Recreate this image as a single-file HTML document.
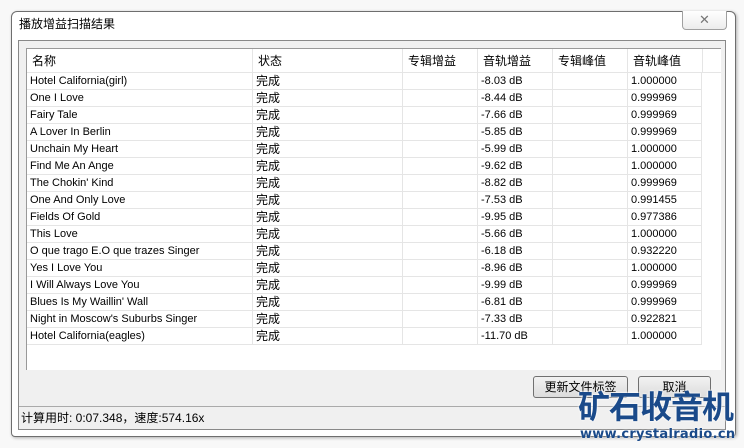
<!DOCTYPE html>
<html><head><meta charset="utf-8"><style>
*{margin:0;padding:0;box-sizing:border-box}
body{width:744px;height:448px;background:#f8f8f8;position:relative;overflow:hidden;font-family:"Liberation Sans","Noto Sans CJK SC",sans-serif;font-size:11px;color:#000}
.win{position:absolute;left:11px;top:11px;width:725px;height:426px;border:1px solid #6e6e6e;border-radius:6px 6px 4px 4px;background:#fff;box-shadow:1px 1px 3px rgba(0,0,0,.3)}
.title{position:absolute;left:19px;top:15px;font-size:12px;font-family:"Noto Sans CJK SC",sans-serif}
.close{position:absolute;left:682px;top:11px;width:45px;height:19px;border:1px solid #a0a0a0;border-top:none;border-radius:0 0 4px 4px;background:linear-gradient(#fff,#ececec);color:#777;font-size:13px;text-align:center;line-height:17px}
.client{position:absolute;left:18px;top:40px;width:708px;height:390px;border:1px solid #888;background:#f0f0f0}
.list{position:absolute;left:26px;top:48px;width:695px;height:322px;background:#fff;border-left:1px solid #999;border-top:1px solid #999}
.hdr{position:absolute;left:0;top:0;height:24px;width:694px;border-bottom:1px solid #e5e5e5;background:#fff}
.hc{position:absolute;top:0;height:23px;line-height:23px;font-size:12px;border-right:1px solid #e5e5e5;padding-left:5px;font-family:"Noto Sans CJK SC",sans-serif}
.row{position:absolute;left:0;height:17px;width:674px}
.c{position:absolute;top:0;height:17px;line-height:17px;border-right:1px solid #e5e5e5;border-bottom:1px solid #e5e5e5;padding-left:3px;white-space:nowrap}
.cn{font-family:"Noto Sans CJK SC",sans-serif;font-size:12px;line-height:15px}
.status{position:absolute;left:19px;top:406px;width:706px;height:23px;border-top:1px solid #aaa;background:#f0f0f0;font-size:12px;line-height:22px;padding-left:2px;font-family:"Liberation Sans","Noto Sans CJK SC",sans-serif}
.btn{position:absolute;top:376px;height:22px;border:1px solid #707070;border-radius:3px;background:linear-gradient(#f2f2f2,#dcdcdc);font-size:12px;text-align:center;line-height:20px;font-family:"Noto Sans CJK SC",sans-serif}
.wm{position:absolute;left:578px;top:386px;font-size:32px;font-weight:bold;color:#1a4a8a;letter-spacing:-1px;font-family:"WenQuanYi Zen Hei","Noto Sans CJK SC",sans-serif;text-shadow:0 0 2px #fff,0 0 2px #fff;line-height:38px;white-space:nowrap}
.wm2{position:absolute;left:580px;top:426px;font-size:13px;font-weight:bold;color:#1a4a8a;letter-spacing:0.3px;text-shadow:0 0 2px #fff;line-height:18px;font-family:"DejaVu Sans",sans-serif;white-space:nowrap}
</style></head><body>
<div class="win"></div>
<div class="title">播放增益扫描结果</div>
<div class="close">✕</div>
<div class="client"></div>
<div class="list">
<div class="hdr">
<div class="hc" style="left:0;width:226px">名称</div>
<div class="hc" style="left:226px;width:150px">状态</div>
<div class="hc" style="left:376px;width:75px">专辑增益</div>
<div class="hc" style="left:451px;width:75px">音轨增益</div>
<div class="hc" style="left:526px;width:75px">专辑峰值</div>
<div class="hc" style="left:601px;width:75px">音轨峰值</div>
<div class="hc" style="left:676px;width:19px;border:none"></div>
</div>
<div id="rows"></div>
</div>
<div class="btn" style="left:533px;width:95px">更新文件标签</div>
<div class="btn" style="left:638px;width:73px">取消</div>
<div class="status">计算用时: 0:07.348，速度:574.16x</div>
<div class="wm">矿石收音机</div>
<div class="wm2">www.crystalradio.cn</div>
<script>
var d=[["Hotel California(girl)","-8.03 dB","1.000000"],["One I Love","-8.44 dB","0.999969"],["Fairy Tale","-7.66 dB","0.999969"],["A Lover In Berlin","-5.85 dB","0.999969"],["Unchain My Heart","-5.99 dB","1.000000"],["Find Me An Ange","-9.62 dB","1.000000"],["The Chokin' Kind","-8.82 dB","0.999969"],["One And Only Love","-7.53 dB","0.991455"],["Fields Of Gold","-9.95 dB","0.977386"],["This Love","-5.66 dB","1.000000"],["O que trago E.O que trazes Singer","-6.18 dB","0.932220"],["Yes I Love You","-8.96 dB","1.000000"],["I Will Always Love You","-9.99 dB","0.999969"],["Blues Is My Waillin' Wall","-6.81 dB","0.999969"],["Night in Moscow's Suburbs Singer","-7.33 dB","0.922821"],["Hotel California(eagles)","-11.70 dB","1.000000"]];
var h="";d.forEach(function(r,i){h+='<div class="row" style="top:'+(24+i*17)+'px"><div class="c" style="left:0;width:226px">'+r[0]+'</div><div class="c cn" style="left:226px;width:150px">完成</div><div class="c" style="left:376px;width:75px"></div><div class="c" style="left:451px;width:75px">'+r[1]+'</div><div class="c" style="left:526px;width:75px"></div><div class="c" style="left:601px;width:74px">'+r[2]+'</div></div>'});
document.getElementById("rows").innerHTML=h;
</script>
</body></html>
